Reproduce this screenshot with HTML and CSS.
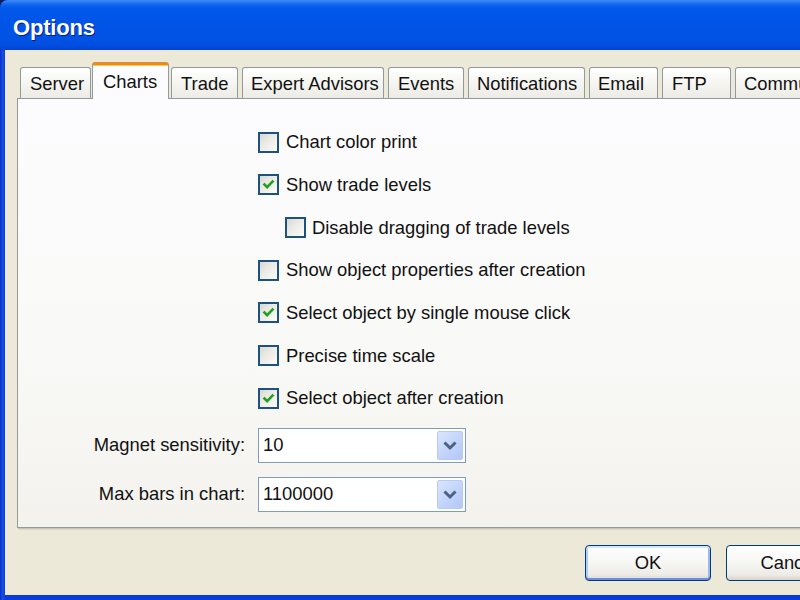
FILE: index.html
```html
<!DOCTYPE html>
<html>
<head>
<meta charset="utf-8">
<title>Options</title>
<link rel="stylesheet" href="styles.css">
</head>
<body>
<div class="window">
  <div class="titlebar"><span class="title">Options</span></div>
  <div class="client">
    <div class="tabs">
      <div class="tab">Server</div>
      <div class="tab active">Charts</div>
      <div class="tab">Trade</div>
      <div class="tab">Expert Advisors</div>
      <div class="tab">Events</div>
      <div class="tab">Notifications</div>
      <div class="tab">Email</div>
      <div class="tab">FTP</div>
      <div class="tab">Community</div>
    </div>
    <div class="panel">
      <div class="checks">
        <div class="check"><span class="box"></span><span>Chart color print</span></div>
        <div class="check"><span class="box checked"><svg viewBox="0 0 21 21"><path d="M5.5 10.5 L8.8 13.8 L15.5 6.8" /></svg></span><span>Show trade levels</span></div>
        <div class="check indent"><span class="box"></span><span>Disable dragging of trade levels</span></div>
        <div class="check"><span class="box"></span><span>Show object properties after creation</span></div>
        <div class="check"><span class="box checked"><svg viewBox="0 0 21 21"><path d="M5.5 10.5 L8.8 13.8 L15.5 6.8" /></svg></span><span>Select object by single mouse click</span></div>
        <div class="check"><span class="box"></span><span>Precise time scale</span></div>
        <div class="check"><span class="box checked"><svg viewBox="0 0 21 21"><path d="M5.5 10.5 L8.8 13.8 L15.5 6.8" /></svg></span><span>Select object after creation</span></div>
      </div>
      <div class="fields">
        <div class="field">
          <span class="lbl">Magnet sensitivity:</span>
          <div class="combo"><span class="val">10</span><span class="drop"><svg viewBox="0 0 26 30"><path d="M7.5 12.5 L13 18 L18.5 12.5" /></svg></span></div>
        </div>
        <div class="field">
          <span class="lbl">Max bars in chart:</span>
          <div class="combo"><span class="val">1100000</span><span class="drop"><svg viewBox="0 0 26 30"><path d="M7.5 12.5 L13 18 L18.5 12.5" /></svg></span></div>
        </div>
      </div>
    </div>
    <div class="buttons">
      <button class="btn default">OK</button>
      <button class="btn">Cancel</button>
    </div>
  </div>
</div>
</body>
</html>
```

FILE: styles.css
```css
html, body {
  margin: 0;
  padding: 0;
  width: 800px;
  height: 600px;
  overflow: hidden;
  background: #0b1c5a;
}

.window {
  width: 800px;
  height: 600px;
  display: flex;
  flex-direction: column;
  background: linear-gradient(to right, #0a2fc8 0px, #1650e6 3px, #0a3ad8 5px);
  border-top-left-radius: 8px;
  overflow: hidden;
  font-family: "Liberation Sans", Arial, sans-serif;
}

.titlebar {
  flex: none;
  height: 50px;
  box-sizing: border-box;
  display: flex;
  align-items: center;
  padding: 6px 0 0 13px;
  background: linear-gradient(to bottom,
    #3f8cf5 0px, #2a7cf8 2px, #0e62ee 5px, #0058ea 9px,
    #0054e6 25px, #0052e4 40px, #0050e0 45px, #0248d8 48px, #0640cc 50px);
}

.title {
  color: #ffffff;
  font-weight: bold;
  font-size: 22px;
  letter-spacing: -0.2px;
  text-shadow: 1px 1px 0 #0a1b8a;
}

.client {
  flex: 1;
  margin: 0 0 5px 5px;
  background: #ece9d8;
  display: flex;
  flex-direction: column;
  padding: 12px 0 0 12px;
  overflow: hidden;
  min-width: 0;
}

.tabs {
  display: flex;
  align-items: flex-end;
  gap: 4px;
  padding-left: 3px;
  height: 36px;
  flex: none;
}

.tab {
  position: relative;
  box-sizing: border-box;
  height: 31px;
  flex: none;
  padding: 2px 0 0 9px;
  border: 1px solid #919b9c;
  border-bottom: none;
  border-radius: 3px 3px 0 0;
  background: linear-gradient(to bottom, #ffffff 0%, #f7f7f4 40%, #ecebe5 100%);
  font-size: 18.4px;
  color: #111;
  display: flex;
  align-items: center;
  white-space: nowrap;
}

.tab:nth-child(1) { width: 71px; }
.tab:nth-child(2) { width: 77px; }
.tab:nth-child(3) { width: 67px; }
.tab:nth-child(4) { width: 142px; padding-left: 8px; }
.tab:nth-child(5) { width: 76px; }
.tab:nth-child(6) { width: 117px; padding-left: 8px; }
.tab:nth-child(7) { width: 69px; padding-left: 8px; }
.tab:nth-child(8) { width: 69px; }
.tab:nth-child(9) { width: 110px; padding-left: 8px; }

.tab.active {
  height: 37px;
  margin: 0 -2px -1px -3px;
  padding: 0 0 0 10px;
  border-top: 3px solid #e68b2c;
  box-shadow: inset 0 1px 0 #ffc73c;
  background: #fcfcfe;
  z-index: 1;
}

.panel {
  flex: none;
  box-sizing: border-box;
  width: 800px;
  height: 430px;
  border: 1px solid #919b9c;
  background: linear-gradient(to bottom, #fcfcfe 0%, #f9f9f7 60%, #f3f2ed 100%);
  box-shadow: 1px 1px 0 #c8c5b5, 2px 2px 0 #dcd9c9;
  padding: 22px 0 0 240px;
  font-size: 18.4px;
  color: #111;
}

.checks {
  display: flex;
  flex-direction: column;
}

.check {
  height: 42.67px;
  display: flex;
  align-items: center;
  gap: 7px;
  white-space: nowrap;
}

.check.indent {
  margin-left: 27px;
  gap: 6px;
}

.box {
  flex: none;
  box-sizing: border-box;
  width: 21px;
  height: 21px;
  border: 2px solid #1c5180;
  background: linear-gradient(135deg, #d9d8d1 0%, #ecebe6 45%, #fbfbf9 100%);
  display: flex;
}

.box svg {
  width: 17px;
  height: 17px;
}

.box svg path {
  fill: none;
  stroke: #21a121;
  stroke-width: 3.2;
  stroke-linecap: square;
  stroke-linejoin: miter;
}

.fields {
  margin: 8px 0 0 -240px;
  display: flex;
  flex-direction: column;
  gap: 14px;
}

.field {
  display: flex;
  align-items: center;
  height: 35px;
}

.lbl {
  width: 227px;
  margin-right: 13px;
  text-align: right;
  white-space: nowrap;
}

.combo {
  box-sizing: border-box;
  width: 208px;
  height: 35px;
  border: 1px solid #7f9db9;
  background: #ffffff;
  display: flex;
  align-items: center;
  padding: 2px 2px 2px 4px;
}

.val {
  flex: 1;
}

.drop {
  box-sizing: border-box;
  width: 26px;
  height: 29px;
  border: 1px solid #b9cbf3;
  border-radius: 2px;
  background: linear-gradient(135deg, #dbe5fc 0%, #c5d5fb 50%, #b3c7f5 100%);
  display: flex;
  align-items: center;
  justify-content: center;
}

.drop svg {
  width: 26px;
  height: 30px;
  flex: none;
}

.drop svg path {
  fill: none;
  stroke: #4d6185;
  stroke-width: 3;
}

.buttons {
  display: flex;
  gap: 15px;
  margin-top: 17px;
  padding-left: 568px;
  flex: none;
}

.btn {
  flex: none;
  box-sizing: border-box;
  width: 126px;
  height: 36px;
  border: 1px solid #003c74;
  border-radius: 4px;
  background: linear-gradient(to bottom, #ffffff 0%, #f6f6f3 50%, #ecebe6 85%, #d8d4c8 100%);
  font-family: "Liberation Sans", Arial, sans-serif;
  font-size: 18.4px;
  color: #111;
  padding: 0;
}

.btn.default {
  box-shadow: inset 0 2px 0 #cee7ff, inset 0 -2px 0 #6a8ee8, inset 2px 0 0 #b2cdf5, inset -2px 0 0 #9ab8ef;
}
```
